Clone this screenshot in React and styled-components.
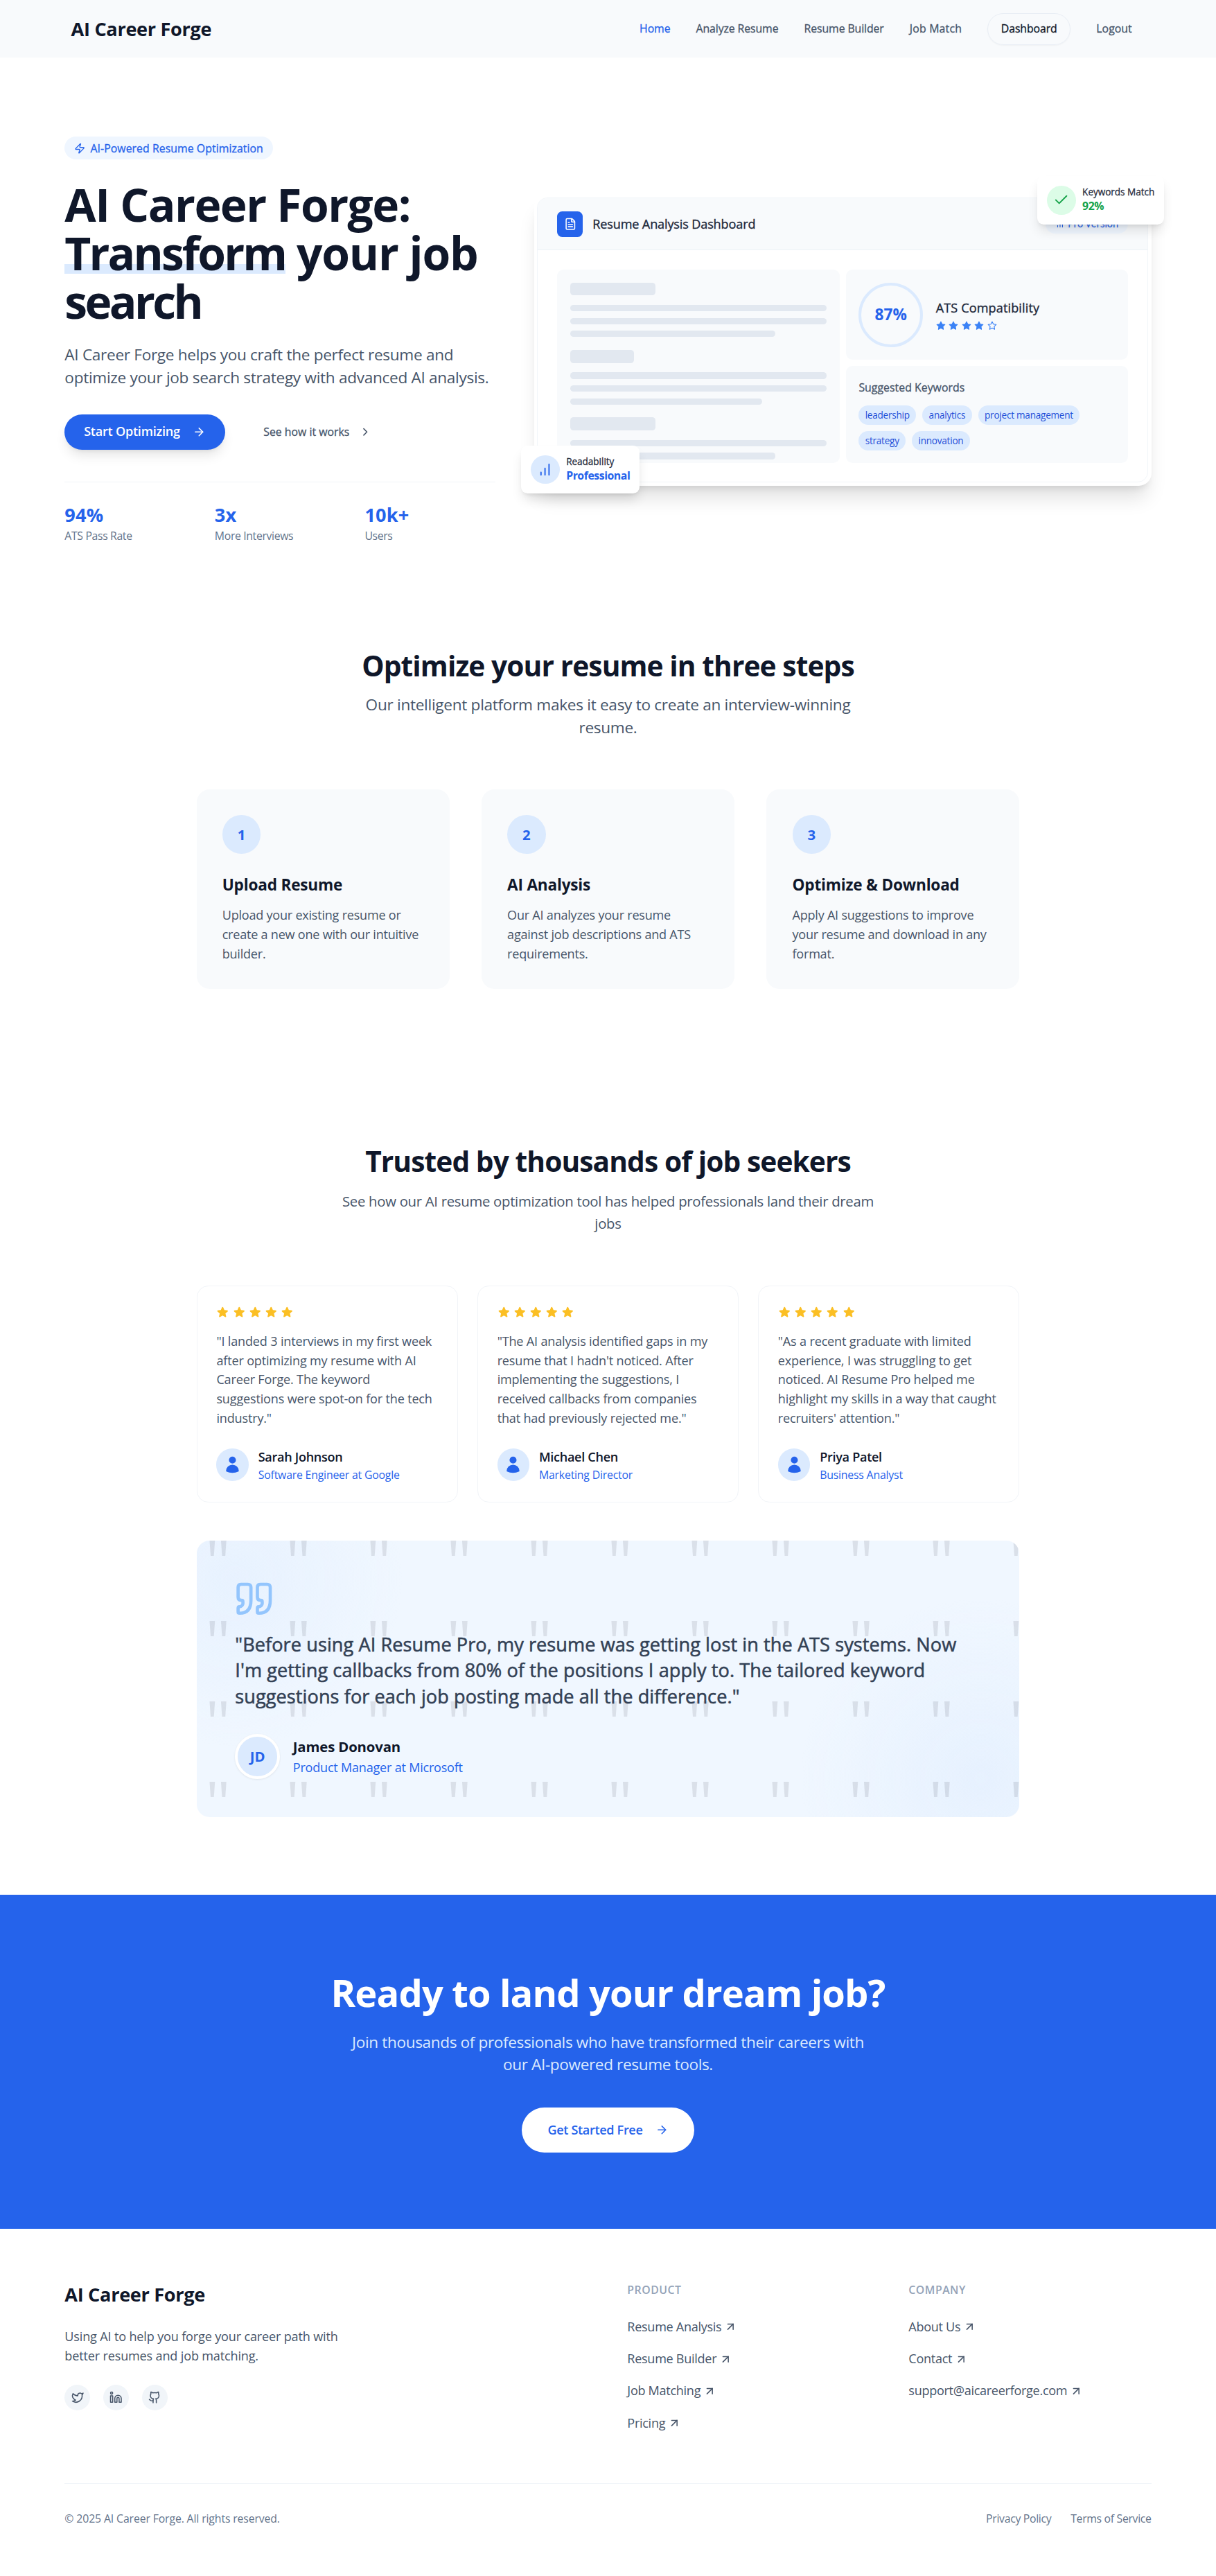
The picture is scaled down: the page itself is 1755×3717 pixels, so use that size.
import React from 'react';
import styled, { createGlobalStyle, css } from 'styled-components';
import { ArrowRight, ArrowUpRight, Check, ChevronRight, FileText, Github, Linkedin, Twitter, Zap } from 'lucide-react';

const c = {
  blue: '#2563eb',
  ink: '#0f172a',
  slate8: '#1e293b',
  slate7: '#334155',
  slate6: '#475569',
  slate5: '#64748b',
  slate4: '#94a3b8',
  line: '#f1f5f9',
  panel: '#f8fafc',
  sky: '#dbeafe',
};

/* size and line height in rem, tracking in px; 500 gets a hairline stroke so it reads as medium */
const type = (size, line, weight = 400, tracking = 0) => css`
  font-size: ${size * 0.975}rem;
  line-height: ${line}rem;
  font-weight: ${weight};
  letter-spacing: ${tracking}px;
  ${weight === 500 ? '-webkit-text-stroke: 0.02em currentColor;' : ''}
`;

const Global = createGlobalStyle`
  *, *::before, *::after { box-sizing: border-box; }
  html { font-size: 18.56px; }
  body { margin: 0; background: #fff; color: ${c.ink}; font-family: "Open Sans", "Noto Sans", sans-serif; }
  h1, h2, h3, h4, p, ul { margin: 0; padding: 0; }
  ul { list-style: none; }
  a { color: inherit; text-decoration: none; white-space: nowrap; }
  svg { display: block; flex: none; }
`;

const icon = (rem) => css`
  width: ${rem}rem;
  height: ${rem}rem;
`;

const Page = styled.div`
  height: 3717px;
  overflow: hidden;
`;

/* ---------- header ---------- */
const Header = styled.header`
  background: ${c.panel};
  height: 83px;
`;
const HeaderInner = styled.div`
  width: 84.5rem;
  height: 100%;
  margin: 0 auto;
  padding: 1px 1.5rem 0 0.5rem;
  display: flex;
  align-items: center;
  justify-content: space-between;
`;
const Brand = styled.div`
  ${type(1.5, 2, 700, -0.32)}
  white-space: nowrap;
`;
const Nav = styled.nav`
  display: flex;
  align-items: center;
  gap: 2rem;
`;
const NavLink = styled.a`
  ${type(0.875, 1.25, 500)}
  letter-spacing: ${(p) => p.$track ?? -0.1}px;
  color: ${(p) => (p.$active ? c.blue : c.slate6)};
`;
const NavPill = styled(NavLink)`
  color: ${c.ink};
  height: 2.5rem;
  padding: 0 1rem;
  display: flex;
  align-items: center;
  border: 1px solid #e9eef5;
  border-radius: 2rem;
  box-shadow: 0 1px 2px rgba(0, 0, 0, 0.04);
`;

/* ---------- hero ---------- */
const Hero = styled.section`
  width: 84.5rem;
  margin: 0 auto;
  padding: 114.4px 0 151px;
  display: grid;
  grid-template-columns: 33.5rem minmax(0, 1fr);
  gap: 3rem;
  align-items: center;
`;
const Eyebrow = styled.div`
  display: inline-flex;
  align-items: center;
  gap: 0.38rem;
  height: 1.75rem;
  padding: 1px 0.75rem 0;
  border-radius: 1rem;
  background: #eff6ff;
  color: ${c.blue};
  ${type(0.875, 1.25, 500, 0.05)}
  vertical-align: top;
  white-space: nowrap;
  svg { ${icon(0.875)} }
`;
const Title = styled.h1`
  margin: calc(1.5rem + 2px) 0 calc(1.5rem - 1.5px);
  font-size: 3.55rem;
  line-height: 70px;
  font-weight: 700;
`;
const TitlePart = styled.span`
  letter-spacing: ${(p) => p.$track}px;
`;
const Marked = styled(TitlePart)`
  display: inline-block;
  position: relative;
  z-index: 0;
  &::before {
    content: '';
    position: absolute;
    z-index: -1;
    left: 0;
    right: 0;
    bottom: 5px;
    height: 0.75rem;
    background: ${c.sky};
  }
`;
const Lead = styled.p`
  ${type(1.25, 1.75, 400, -0.31)}
  color: ${c.slate6};
`;
const Actions = styled.div`
  margin-top: calc(2rem - 0.5px);
  display: flex;
  gap: 1rem;
`;
const PrimaryButton = styled.a`
  display: flex;
  align-items: center;
  gap: 1rem;
  height: 2.75rem;
  padding: 0 1.5rem;
  border-radius: 2rem;
  background: ${c.blue};
  color: #fff;
  ${type(1, 1.5, 600, -0.24)}
  box-shadow: 0 11px 17px -3px rgba(0, 0, 0, 0.1), 0 4px 7px -4px rgba(0, 0, 0, 0.1);
  svg { ${icon(1)} }
`;
const TextButton = styled.a`
  display: flex;
  align-items: center;
  gap: 0.72rem;
  padding: 0 2rem;
  color: ${c.slate6};
  ${type(0.875, 1.25, 500, 0)}
  svg { ${icon(1)} }
`;
const Stats = styled.div`
  margin-top: 2.5rem;
  padding-top: 1.5rem;
  border-top: 1px solid ${c.line};
  display: grid;
  grid-template-columns: repeat(3, 1fr);
  gap: 1.5rem;
`;
const StatValue = styled.div`
  ${type(1.5, 2, 700, 0.15)}
  color: ${c.blue};
`;
const StatLabel = styled.div`
  ${type(0.875, 1.25, 400, -0.37)}
  padding-top: 1px;
  margin-bottom: -1px;
  color: ${c.slate5};
`;

/* ---------- dashboard preview ---------- */
const Preview = styled.div`
  position: relative;
  padding: 0.25rem;
  border-radius: 1rem;
  background: #fff;
  box-shadow: 0 23px 29px -6px rgba(0, 0, 0, 0.12), 0 9px 12px -7px rgba(0, 0, 0, 0.12);
`;
const Window = styled.div`
  border: 1px solid ${c.line};
  border-radius: 0.8rem;
  overflow: hidden;
`;
const WindowBar = styled.div`
  display: flex;
  align-items: center;
  padding: 1rem 1.5rem;
  background: ${c.panel};
  border-bottom: 1px solid #edf2f7;
`;
const FileBadge = styled.div`
  width: 2rem;
  height: 2rem;
  border-radius: 0.4rem;
  background: ${c.blue};
  color: #fff;
  display: grid;
  place-items: center;
  svg { ${icon(1)} }
`;
const WindowTitle = styled.div`
  ${type(1, 1.5, 500, -0.14)}
  margin-left: 0.75rem;
  padding-top: 1px;
  flex: 1;
  color: ${c.slate8};
`;
const ProTag = styled.div`
  display: flex;
  align-items: center;
  gap: 0.25rem;
  padding: 0.25rem 0.75rem;
  border-radius: 1rem;
  background: #eff6ff;
  color: ${c.blue};
  ${type(0.75, 1, 500, 0)}
  svg { ${icon(0.75)} }
`;
const WindowBody = styled.div`
  height: 18rem;
  padding: 1.5rem;
  display: grid;
  grid-template-columns: 1fr 1fr;
  gap: 0.5rem;
`;
const Panel = styled.div`
  padding: 1rem;
  border-radius: 0.5rem;
  background: ${c.panel};
  overflow: hidden;
`;
const Skeleton = styled(Panel)`
  display: flex;
  flex-direction: column;
  gap: 0.5rem;
`;
const SkeletonHead = styled.div`
  width: ${(p) => p.$w};
  height: 1rem;
  margin: ${(p) => (p.$first ? '0' : '0.5rem')} 0 0.25rem;
  flex: none;
  border-radius: 0.25rem;
  background: #e2e8f0;
`;
const SkeletonLine = styled.div`
  width: ${(p) => p.$w || '100%'};
  height: 0.5rem;
  flex: none;
  border-radius: 0.25rem;
  background: #e2e8f0;
`;
const PanelStack = styled.div`
  display: grid;
  grid-template-rows: 7rem minmax(0, 1fr);
  gap: 0.5rem;
`;
const ScorePanel = styled(Panel)`
  display: flex;
  align-items: center;
  gap: 1rem;
`;
const Ring = styled.div`
  width: 5rem;
  height: 5rem;
  border: 0.25rem solid ${c.sky};
  border-radius: 50%;
  display: grid;
  place-items: center;
  color: ${c.blue};
  ${type(1.25, 1.75, 700, 0.1)}
`;
const ScoreTitle = styled.div`
  ${type(1, 1.5, 500, 0.12)}
  color: ${c.slate8};
`;
const Stars = styled.div`
  display: flex;
  gap: 0.25rem;
  margin-top: ${(p) => p.$mt || 0};
  color: ${(p) => p.$color};
  svg { ${(p) => icon(p.$size)} }
`;
const PanelLabel = styled.div`
  ${type(0.875, 1.25, 500, 0.03)}
  color: ${c.slate6};
  padding-top: 1px;
  margin-bottom: 0.75rem;
`;
const Chips = styled.div`
  display: flex;
  flex-wrap: wrap;
  gap: 0.5rem;
`;
const Chip = styled.span`
  padding: 0.25rem 0.5rem;
  border-radius: 1rem;
  background: ${c.sky};
  color: #1d4ed8;
  ${type(0.75, 1, 400, -0.24)}
`;
const Floating = styled.div`
  position: absolute;
  ${(p) => (p.$corner === 'top' ? 'top: -1.43rem; right: -1rem;' : 'bottom: -0.6rem; left: -1rem;')}
  display: flex;
  align-items: center;
  gap: 0.5rem;
  padding: 0.75rem;
  border-radius: 0.5rem;
  background: #fff;
  box-shadow: 0 11px 17px -3px rgba(0, 0, 0, 0.12), 0 4px 7px -4px rgba(0, 0, 0, 0.12);
`;
const FloatIcon = styled.div`
  width: 2.25rem;
  height: 2.25rem;
  border-radius: 50%;
  background: ${(p) => p.$bg};
  color: ${(p) => p.$fg};
  display: grid;
  place-items: center;
  svg { ${icon(1.25)} }
`;
const FloatLabel = styled.div`
  ${type(0.75, 1, 500, -0.03)}
  color: ${c.slate8};
  white-space: nowrap;
`;
const FloatValue = styled.div`
  ${type(0.875, 1.25, 700, -0.45)}
  color: ${(p) => p.$fg};
`;

/* ---------- shared section pieces ---------- */
const Section = styled.section`
  width: 64rem;
  margin: 0 auto;
  padding-bottom: ${(p) => p.$pb};
`;
const SectionHead = styled.div`
  width: 42rem;
  margin: 0 auto calc(4rem - 1px);
  text-align: center;
`;
const Heading = styled.h2`
  ${type(2.25, 2.5, 700, -0.92)}
  padding-top: 1.5px;
  margin-bottom: calc(1rem - 0.5px);
`;
const Sub = styled.p`
  ${(p) => type(p.$small ? 1.125 : 1.25, 1.75, 400, -0.3)}
  color: ${c.slate6};
`;
const Cols = styled.div`
  display: grid;
  grid-template-columns: repeat(3, minmax(0, 1fr));
  gap: ${(p) => p.$gap};
`;

/* ---------- steps ---------- */
const StepCard = styled.div`
  padding: 2rem 2rem calc(2rem - 1px);
  border-radius: 1rem;
  background: ${c.panel};
`;
const StepNumber = styled.div`
  width: 3rem;
  height: 3rem;
  border-radius: 50%;
  background: ${c.sky};
  color: ${c.blue};
  display: grid;
  place-items: center;
  ${type(1.125, 1.75, 700)}
`;
const StepTitle = styled.h3`
  ${type(1.25, 1.75, 700, -0.2)}
  margin: calc(1.5rem + 1px) 0 0.75rem;
`;
const StepText = styled.p`
  ${type(1, 1.5, 400, -0.24)}
  color: ${c.slate6};
`;

/* ---------- testimonials ---------- */
const QuoteCard = styled.div`
  padding: 1.5rem;
  border: 1px solid #f1f4f8;
  border-radius: 0.9rem;
  background: #fff;
`;
const QuoteText = styled.p`
  ${type(1, 1.5, 400, -0.18)}
  color: ${c.slate6};
  margin: calc(1rem + 1px) 0 calc(1.5rem - 1px);
`;
const Person = styled.div`
  display: flex;
  align-items: center;
  gap: 0.75rem;
`;
const Avatar = styled.div`
  width: 2.5rem;
  height: 2.5rem;
  border-radius: 50%;
  background: ${c.sky};
  color: ${c.blue};
  display: grid;
  place-items: center;
  svg { ${icon(1.45)} }
`;
const PersonName = styled.div`
  ${type(1, 1.5, 600, -0.3)}
  padding-top: 1px;
`;
const PersonRole = styled.div`
  ${type(0.875, 1.25, 400, -0.2)}
  margin-bottom: -1px;
  color: ${c.blue};
`;

const Featured = styled.div`
  position: relative;
  margin-top: 3rem;
  padding: 3rem;
  border-radius: 1rem;
  overflow: hidden;
  background:
    radial-gradient(circle 13rem at 3rem 3rem, rgba(219, 234, 254, 0.4), rgba(219, 234, 254, 0)),
    radial-gradient(circle 14rem at calc(100% - 3rem) calc(100% - 3rem), rgba(219, 234, 254, 0.45), rgba(219, 234, 254, 0)),
    #f0f7ff;
`;
const Pattern = styled.svg`
  position: absolute;
  inset: 0;
  width: 100%;
  height: 100%;
`;
const FeaturedBody = styled.div`
  position: relative;
`;
const QuoteMark = styled.svg`
  ${icon(3)}
  color: #93c5fd;
`;
const FeaturedText = styled.p`
  ${type(1.5, 2, 500, 0.07)}
  color: ${c.slate7};
  margin: calc(1rem + 1px) 0 calc(2rem - 1px);
`;
const FeaturedPerson = styled(Person)`
  gap: 1rem;
`;
const Initials = styled.div`
  width: 3.5rem;
  height: 3.5rem;
  border: 0.25rem solid #fff;
  border-radius: 50%;
  background: ${c.sky};
  color: ${c.blue};
  display: grid;
  place-items: center;
  box-shadow: 0 1px 3px rgba(0, 0, 0, 0.08);
  ${type(1.125, 1.75, 700)}
`;
const FeaturedName = styled.div`
  ${type(1.125, 1.75, 700, -0.15)}
`;
const FeaturedRole = styled.div`
  ${type(1, 1.5, 400, -0.23)}
  color: ${c.blue};
`;

/* ---------- call to action ---------- */
const Cta = styled.section`
  background: ${c.blue};
  padding: 6rem 0 calc(6rem - 1.5px);
  display: flex;
  flex-direction: column;
  align-items: center;
  text-align: center;
`;
const CtaTitle = styled.h2`
  ${type(3, 3, 700, -0.86)}
  color: #fff;
  padding-top: 2.5px;
  margin-bottom: calc(1.5rem - 0.5px);
`;
const CtaText = styled.p`
  ${type(1.25, 1.75, 400, -0.38)}
  width: 40.8rem;
  color: ${c.sky};
`;
const CtaButton = styled.a`
  margin-top: calc(2.5rem - 1px);
  display: flex;
  align-items: center;
  gap: 1rem;
  height: 3.5rem;
  padding: 0 2rem;
  border-radius: 2rem;
  background: #fff;
  color: ${c.blue};
  ${type(1, 1.5, 600, -0.34)}
  svg { ${icon(1)} }
`;

/* ---------- footer ---------- */
const Footer = styled.footer`
  width: 84.5rem;
  margin: 0 auto;
  padding-top: calc(4rem + 1.5px);
`;
const FooterGrid = styled.div`
  display: grid;
  grid-template-columns: calc(50% - 1.5rem) minmax(0, 1fr) minmax(0, 1fr);
  gap: 3rem;
`;
const About = styled.p`
  ${type(1, 1.5, 400, -0.17)}
  width: 23rem;
  margin: calc(1.5rem + 2px) 0 calc(1.5rem - 1px);
  color: ${c.slate6};
`;
const Socials = styled.div`
  display: flex;
  gap: 1rem;
`;
const Social = styled.a`
  width: 2rem;
  height: 2rem;
  border-radius: 50%;
  background: ${c.line};
  color: ${c.slate6};
  display: grid;
  place-items: center;
  svg { ${icon(1)} }
`;
const ColTitle = styled.h4`
  ${type(0.875, 1.25, 600, 0.5)}
  padding-top: 1px;
  color: ${c.slate4};
`;
const LinkList = styled.ul`
  margin-top: 1.5rem;
  display: grid;
  gap: 1rem;
`;
const FooterLink = styled.a`
  display: flex;
  align-items: center;
  gap: 0.2rem;
  ${type(1, 1.5, 400, -0.3)}
  color: ${c.slate6};
  svg { ${icon(1)} }
`;
const Bottom = styled.div`
  margin-top: calc(4rem - 1.5px);
  padding-top: calc(2rem + 1.5px);
  border-top: 1px solid ${c.line};
  display: flex;
  justify-content: space-between;
  ${type(0.875, 1.25, 400, -0.14)}
  color: ${c.slate5};
`;
const Legal = styled.div`
  display: flex;
  gap: 1.5rem;
  letter-spacing: -0.33px;
`;

/* ---------- small drawings ---------- */
const Bars = () => (
  <svg viewBox="0 0 24 24" fill="none" stroke="currentColor" strokeWidth="2" strokeLinecap="round">
    <path d="M12 20V10M18 20V4M6 20v-4" />
  </svg>
);
const LineStar = ({ filled }) => (
  <svg viewBox="0 0 24 24" fill={filled ? 'currentColor' : 'none'} stroke="currentColor" strokeWidth="2" strokeLinejoin="round">
    <polygon points="12 2 15.09 8.26 22 9.27 17 14.14 18.18 21.02 12 17.77 5.82 21.02 7 14.14 2 9.27 8.91 8.26 12 2" />
  </svg>
);
const SolidStar = () => (
  <svg viewBox="0 0 24 24" fill="currentColor">
    <path d="M10.788 3.21c.448-1.077 1.976-1.077 2.424 0l2.082 5.006 5.404.434c1.164.093 1.636 1.545.749 2.305l-4.117 3.527 1.257 5.273c.271 1.136-.964 2.033-1.96 1.425L12 18.354 7.373 21.18c-.996.608-2.231-.29-1.96-1.425l1.257-5.273-4.117-3.527c-.887-.76-.415-2.212.749-2.305l5.404-.434 2.082-5.005Z" />
  </svg>
);
const UserGlyph = () => (
  <svg viewBox="0 0 24 24" fill="currentColor">
    <path d="M7.5 6a4.5 4.5 0 1 1 9 0 4.5 4.5 0 0 1-9 0ZM3.751 20.105a8.25 8.25 0 0 1 16.498 0 .75.75 0 0 1-.437.695A18.683 18.683 0 0 1 12 22.5c-2.786 0-5.433-.608-7.812-1.7a.75.75 0 0 1-.437-.695Z" />
  </svg>
);
const commaPath =
  'M3 21c3 0 7-1 7-8V5c0-1.25-.756-2.017-2-2H4c-1.25 0-2 .75-2 1.972V11c0 1.25.75 2 2 2 1 0 1 0 1 1v1c0 1-1 2-2 2s-1 .008-1 1.031V20c0 1 0 1 1 1z';

const five = [0, 1, 2, 3, 4];

const steps = [
  ['Upload Resume', 'Upload your existing resume or create a new one with our intuitive builder.'],
  ['AI Analysis', 'Our AI analyzes your resume against job descriptions and ATS requirements.'],
  ['Optimize & Download', 'Apply AI suggestions to improve your resume and download in any format.'],
];
const reviews = [
  ['Sarah Johnson', 'Software Engineer at Google', '"I landed 3 interviews in my first week after optimizing my resume with AI Career Forge. The keyword suggestions were spot-on for the tech industry."'],
  ['Michael Chen', 'Marketing Director', '"The AI analysis identified gaps in my resume that I hadn\'t noticed. After implementing the suggestions, I received callbacks from companies that had previously rejected me."'],
  ['Priya Patel', 'Business Analyst', '"As a recent graduate with limited experience, I was struggling to get noticed. AI Resume Pro helped me highlight my skills in a way that caught recruiters\' attention."'],
];
const stats = [['94%', 'ATS Pass Rate'], ['3x', 'More Interviews'], ['10k+', 'Users']];
const keywords = ['leadership', 'analytics', 'project management', 'strategy', 'innovation'];
const columns = [
  ['PRODUCT', ['Resume Analysis', 'Resume Builder', 'Job Matching', 'Pricing']],
  ['COMPANY', ['About Us', 'Contact', 'support@aicareerforge.com']],
];

export default function App() {
  return (
    <Page>
      <Global />
      <Header>
        <HeaderInner>
          <Brand>AI Career Forge</Brand>
          <Nav>
            <NavLink $active>Home</NavLink>
            <NavLink>Analyze Resume</NavLink>
            <NavLink>Resume Builder</NavLink>
            <NavLink $track={0.2}>Job Match</NavLink>
            <NavPill>Dashboard</NavPill>
            <NavLink $track={0.05}>Logout</NavLink>
          </Nav>
        </HeaderInner>
      </Header>

      <Hero>
        <div>
          <Eyebrow><Zap />AI-Powered Resume Optimization</Eyebrow>
          <Title>
            <TitlePart $track={-1.5}>AI Career Forge:</TitlePart>
            <br />
            <Marked $track={-2.9}>Transform</Marked>
            <TitlePart $track={-1.2}> your job</TitlePart>
            <br />
            <TitlePart $track={-3.6}>search</TitlePart>
          </Title>
          <Lead>
            AI Career Forge helps you craft the perfect resume and optimize your job search strategy with advanced AI analysis.
          </Lead>
          <Actions>
            <PrimaryButton>Start Optimizing<ArrowRight /></PrimaryButton>
            <TextButton>See how it works<ChevronRight /></TextButton>
          </Actions>
          <Stats>
            {stats.map(([value, label]) => (
              <div key={label}>
                <StatValue>{value}</StatValue>
                <StatLabel>{label}</StatLabel>
              </div>
            ))}
          </Stats>
        </div>

        <Preview>
          <Window>
            <WindowBar>
              <FileBadge><FileText /></FileBadge>
              <WindowTitle>Resume Analysis Dashboard</WindowTitle>
              <ProTag><Bars />Pro Version</ProTag>
            </WindowBar>
            <WindowBody>
              <Skeleton>
                <SkeletonHead $w="33.33%" $first />
                <SkeletonLine />
                <SkeletonLine />
                <SkeletonLine $w="80%" />
                <SkeletonHead $w="25%" />
                <SkeletonLine />
                <SkeletonLine />
                <SkeletonLine $w="75%" />
                <SkeletonHead $w="33.33%" />
                <SkeletonLine />
                <SkeletonLine $w="80%" />
              </Skeleton>
              <PanelStack>
                <ScorePanel>
                  <Ring>87%</Ring>
                  <div>
                    <ScoreTitle>ATS Compatibility</ScoreTitle>
                    <Stars $size={0.75} $color="#3b82f6" $mt="0.25rem">
                      {five.map((i) => <LineStar key={i} filled={i < 4} />)}
                    </Stars>
                  </div>
                </ScorePanel>
                <Panel>
                  <PanelLabel>Suggested Keywords</PanelLabel>
                  <Chips>{keywords.map((k) => <Chip key={k}>{k}</Chip>)}</Chips>
                </Panel>
              </PanelStack>
            </WindowBody>
          </Window>
          <Floating $corner="top">
            <FloatIcon $bg="#dcfce7" $fg="#16a34a"><Check /></FloatIcon>
            <div>
              <FloatLabel>Keywords Match</FloatLabel>
              <FloatValue $fg="#16a34a">92%</FloatValue>
            </div>
          </Floating>
          <Floating $corner="bottom">
            <FloatIcon $bg={c.sky} $fg={c.blue}><Bars /></FloatIcon>
            <div>
              <FloatLabel>Readability</FloatLabel>
              <FloatValue $fg={c.blue}>Professional</FloatValue>
            </div>
          </Floating>
        </Preview>
      </Hero>

      <Section $pb="calc(12rem + 1px)">
        <SectionHead>
          <Heading>Optimize your resume in three steps</Heading>
          <Sub>Our intelligent platform makes it easy to create an interview-winning resume.</Sub>
        </SectionHead>
        <Cols $gap="2.5rem">
          {steps.map(([title, text], i) => (
            <StepCard key={title}>
              <StepNumber>{i + 1}</StepNumber>
              <StepTitle>{title}</StepTitle>
              <StepText>{text}</StepText>
            </StepCard>
          ))}
        </Cols>
      </Section>

      <Section $pb="6rem">
        <SectionHead>
          <Heading>Trusted by thousands of job seekers</Heading>
          <Sub $small>See how our AI resume optimization tool has helped professionals land their dream jobs</Sub>
        </SectionHead>
        <Cols $gap="1.5rem">
          {reviews.map(([name, role, text]) => (
            <QuoteCard key={name}>
              <Stars $size={1} $color="#fbbf24">{five.map((i) => <SolidStar key={i} />)}</Stars>
              <QuoteText>{text}</QuoteText>
              <Person>
                <Avatar><UserGlyph /></Avatar>
                <div>
                  <PersonName>{name}</PersonName>
                  <PersonRole>{role}</PersonRole>
                </div>
              </Person>
            </QuoteCard>
          ))}
        </Cols>
        <Featured>
          <Pattern>
            <defs>
              <pattern id="marks" width="116" height="116" patternUnits="userSpaceOnUse">
                <text x="12.3" y="64" fontFamily="Open Sans, sans-serif" fontSize="92" fill="#0f172a" fillOpacity="0.1">"</text>
              </pattern>
            </defs>
            <rect width="100%" height="100%" fill="url(#marks)" />
          </Pattern>
          <FeaturedBody>
            <QuoteMark viewBox="0 0 24 24" fill="none" stroke="currentColor" strokeWidth="2" strokeLinecap="round" strokeLinejoin="round">
              <path d={commaPath} />
              <path d={commaPath} transform="translate(12 0)" />
            </QuoteMark>
            <FeaturedText>
              "Before using AI Resume Pro, my resume was getting lost in the ATS systems. Now I'm getting callbacks from 80% of the positions I apply to. The tailored keyword suggestions for each job posting made all the difference."
            </FeaturedText>
            <FeaturedPerson>
              <Initials>JD</Initials>
              <div>
                <FeaturedName>James Donovan</FeaturedName>
                <FeaturedRole>Product Manager at Microsoft</FeaturedRole>
              </div>
            </FeaturedPerson>
          </FeaturedBody>
        </Featured>
      </Section>

      <Cta>
        <CtaTitle>Ready to land your dream job?</CtaTitle>
        <CtaText>
          Join thousands of professionals who have transformed their careers with our AI-powered resume tools.
        </CtaText>
        <CtaButton>Get Started Free<ArrowRight /></CtaButton>
      </Cta>

      <Footer>
        <FooterGrid>
          <div>
            <Brand>AI Career Forge</Brand>
            <About>Using AI to help you forge your career path with better resumes and job matching.</About>
            <Socials>
              <Social><Twitter /></Social>
              <Social><Linkedin /></Social>
              <Social><Github /></Social>
            </Socials>
          </div>
          {columns.map(([title, links]) => (
            <div key={title}>
              <ColTitle>{title}</ColTitle>
              <LinkList>
                {links.map((l) => (
                  <li key={l}><FooterLink>{l}<ArrowUpRight /></FooterLink></li>
                ))}
              </LinkList>
            </div>
          ))}
        </FooterGrid>
        <Bottom>
          <span>© 2025 AI Career Forge. All rights reserved.</span>
          <Legal>
            <a>Privacy Policy</a>
            <a>Terms of Service</a>
          </Legal>
        </Bottom>
      </Footer>
    </Page>
  );
}
